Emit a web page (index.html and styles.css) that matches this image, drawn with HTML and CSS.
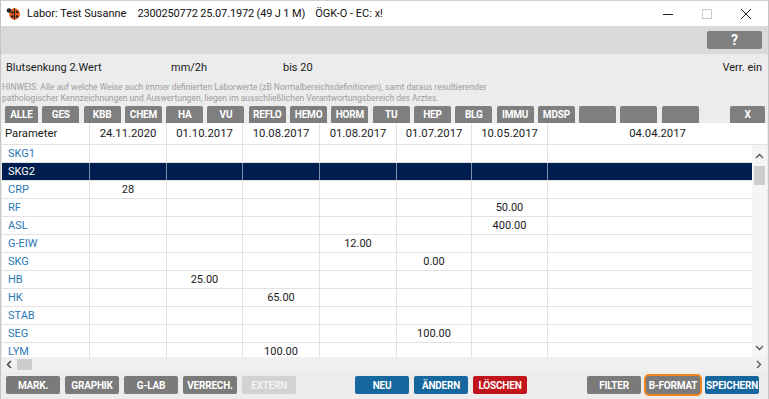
FILE: index.html
```html
<!DOCTYPE html>
<html lang="de">
<head>
<meta charset="utf-8">
<title>Labor</title>
<link rel="stylesheet" href="styles.css">
</head>
<body>
<div class="window">
  <header class="titlebar">
    <svg class="app-icon" width="15" height="15" viewBox="0 0 15 15">
      <ellipse cx="8.5" cy="8" rx="5.5" ry="5.8" fill="#e8601c"/>
      <path d="M8.5 2.2 L8.5 13.8" stroke="#222" stroke-width="1"/>
      <circle cx="3" cy="4.5" r="2.3" fill="#222"/>
      <circle cx="6.5" cy="6.5" r="1.3" fill="#222"/>
      <circle cx="11" cy="6" r="1.3" fill="#222"/>
      <circle cx="6.3" cy="10.5" r="1.3" fill="#222"/>
      <circle cx="11" cy="10.5" r="1.3" fill="#222"/>
    </svg>
    <span class="t-name">Labor: Test Susanne</span>
    <span class="t-id">2300250772 25.07.1972 (49 J 1 M)</span>
    <span class="t-ins">ÖGK-O - EC: x!</span>
    <div class="win-ctrls">
      <svg class="wc" width="12" height="12" viewBox="0 0 12 12"><path d="M1 6.5 H11" stroke="#222" stroke-width="1"/></svg>
      <svg class="wc" width="12" height="12" viewBox="0 0 12 12"><rect x="1.5" y="1.5" width="9" height="9" fill="none" stroke="#c8c8c8" stroke-width="1"/></svg>
      <svg class="wc" width="12" height="12" viewBox="0 0 12 12"><path d="M1 1 L11 11 M11 1 L1 11" stroke="#222" stroke-width="1"/></svg>
    </div>
  </header>

  <div class="toolbar">
    <button class="help">?</button>
  </div>

  <main class="content">
    <div class="info">
      <span class="i-name">Blutsenkung 2.Wert</span>
      <span class="i-unit">mm/2h</span>
      <span class="i-range">bis 20</span>
      <span class="i-verr">Verr. ein</span>
    </div>
    <p class="hint">HINWEIS: Alle auf welche Weise auch immer definierten Laborwerte (zB Normalbereichsdefinitionen), samt daraus resultierender<br>pathologischer Kennzeichnungen und Auswertungen, liegen im ausschließlichen Verantwortungsbereich des Arztes.</p>

    <nav class="tabs">
      <button class="tab first">ALLE</button>
      <button class="tab">GES</button>
      <button class="tab">KBB</button>
      <button class="tab">CHEM</button>
      <button class="tab">HA</button>
      <button class="tab">VU</button>
      <button class="tab">REFLO</button>
      <button class="tab">HEMO</button>
      <button class="tab">HORM</button>
      <button class="tab">TU</button>
      <button class="tab">HEP</button>
      <button class="tab">BLG</button>
      <button class="tab">IMMU</button>
      <button class="tab">MDSP</button>
      <button class="tab"></button>
      <button class="tab"></button>
      <button class="tab"></button>
      <button class="tab close">X</button>
    </nav>

    <section class="grid">
      <div class="row head">
        <div class="c p">Parameter</div>
        <div class="c">24.11.2020</div>
        <div class="c">01.10.2017</div>
        <div class="c">10.08.2017</div>
        <div class="c">01.08.2017</div>
        <div class="c">01.07.2017</div>
        <div class="c">10.05.2017</div>
        <div class="c last">04.04.2017</div>
      </div>
      <div class="body-wrap">
        <div class="body">
          <div class="row"><div class="c p">SKG1</div><div class="c"></div><div class="c"></div><div class="c"></div><div class="c"></div><div class="c"></div><div class="c"></div><div class="c last"></div></div>
          <div class="row sel"><div class="c p">SKG2</div><div class="c"></div><div class="c"></div><div class="c"></div><div class="c"></div><div class="c"></div><div class="c"></div><div class="c last"></div></div>
          <div class="row"><div class="c p">CRP</div><div class="c">28</div><div class="c"></div><div class="c"></div><div class="c"></div><div class="c"></div><div class="c"></div><div class="c last"></div></div>
          <div class="row"><div class="c p">RF</div><div class="c"></div><div class="c"></div><div class="c"></div><div class="c"></div><div class="c"></div><div class="c">50.00</div><div class="c last"></div></div>
          <div class="row"><div class="c p">ASL</div><div class="c"></div><div class="c"></div><div class="c"></div><div class="c"></div><div class="c"></div><div class="c">400.00</div><div class="c last"></div></div>
          <div class="row"><div class="c p">G-EIW</div><div class="c"></div><div class="c"></div><div class="c"></div><div class="c">12.00</div><div class="c"></div><div class="c"></div><div class="c last"></div></div>
          <div class="row"><div class="c p">SKG</div><div class="c"></div><div class="c"></div><div class="c"></div><div class="c"></div><div class="c">0.00</div><div class="c"></div><div class="c last"></div></div>
          <div class="row"><div class="c p">HB</div><div class="c"></div><div class="c">25.00</div><div class="c"></div><div class="c"></div><div class="c"></div><div class="c"></div><div class="c last"></div></div>
          <div class="row"><div class="c p">HK</div><div class="c"></div><div class="c"></div><div class="c">65.00</div><div class="c"></div><div class="c"></div><div class="c"></div><div class="c last"></div></div>
          <div class="row"><div class="c p">STAB</div><div class="c"></div><div class="c"></div><div class="c"></div><div class="c"></div><div class="c"></div><div class="c"></div><div class="c last"></div></div>
          <div class="row"><div class="c p">SEG</div><div class="c"></div><div class="c"></div><div class="c"></div><div class="c"></div><div class="c">100.00</div><div class="c"></div><div class="c last"></div></div>
          <div class="row"><div class="c p">LYM</div><div class="c"></div><div class="c"></div><div class="c">100.00</div><div class="c"></div><div class="c"></div><div class="c"></div><div class="c last"></div></div>
        </div>
        <div class="vscroll">
          <svg class="arrow" width="9" height="6" viewBox="0 0 9 6"><path d="M1 5 L4.5 1.5 L8 5" fill="none" stroke="#555" stroke-width="1.3"/></svg>
          <div class="vthumb"></div>
          <div class="spacer"></div>
          <svg class="arrow" width="9" height="6" viewBox="0 0 9 6"><path d="M1 1 L4.5 4.5 L8 1" fill="none" stroke="#555" stroke-width="1.3"/></svg>
        </div>
      </div>
      <div class="hscroll">
        <svg class="harrow" width="6" height="9" viewBox="0 0 6 9"><path d="M5 1 L1.5 4.5 L5 8" fill="none" stroke="#333" stroke-width="1.3"/></svg>
        <div class="hthumb"></div>
        <div class="spacer"></div>
        <svg class="harrow" width="6" height="9" viewBox="0 0 6 9"><path d="M1 1 L4.5 4.5 L1 8" fill="none" stroke="#555" stroke-width="1.3"/></svg>
      </div>
    </section>

    <footer class="actions">
      <button class="btn grey">MARK.</button>
      <button class="btn grey">GRAPHIK</button>
      <button class="btn grey">G-LAB</button>
      <button class="btn grey">VERRECH.</button>
      <button class="btn disabled">EXTERN</button>
      <button class="btn blue neu">NEU</button>
      <button class="btn blue">ÄNDERN</button>
      <button class="btn red">LÖSCHEN</button>
      <button class="btn grey filter">FILTER</button>
      <button class="btn grey focus">B-FORMAT</button>
      <button class="btn blue">SPEICHERN</button>
    </footer>
  </main>
</div>
</body>
</html>
```

FILE: styles.css
```css
* { box-sizing: border-box; }
html, body { margin: 0; padding: 0; }
body {
  width: 769px;
  height: 399px;
  overflow: hidden;
  background: #ececec;
  font-family: Roboto, "Liberation Sans", sans-serif;
  color: #1a1a1a;
}
button { font-family: inherit; border: none; padding: 0; cursor: default; }

.window {
  width: 769px;
  height: 399px;
  display: flex;
  flex-direction: column;
  border-left: 1px solid #c4c4c4;
  border-right: 1px solid #c4c4c4;
}

/* title bar */
.titlebar {
  height: 26px;
  background: #fff;
  display: flex;
  align-items: center;
  font-family: Roboto, "Liberation Sans", sans-serif;
  font-size: 11px;
  color: #111;
  border-top: 1px solid #d0d0d0;
  white-space: nowrap;
}
.app-icon { margin-left: 5px; margin-right: 6px; flex: none; }
.t-name { flex: none; margin-right: 11px; }
.t-id { flex: none; margin-right: 10px; letter-spacing: -0.15px; }
.t-ins { flex: none; }
.win-ctrls {
  margin-left: auto;
  display: flex;
  align-items: center;
  gap: 27px;
  margin-right: 16px;
}
.wc { display: block; }

/* toolbar */
.toolbar {
  height: 28px;
  background: #dadada;
  display: flex;
  justify-content: flex-end;
  align-items: flex-start;
  padding: 5px 6px 0 0;
}
.help {
  width: 55px;
  height: 18px;
  background: #808080;
  color: #fff;
  font-weight: 700;
  font-size: 14px;
  line-height: 18px;
  border-radius: 2px;
}

/* content */
.content {
  flex: 1;
  display: flex;
  flex-direction: column;
  background: #ececec;
}
.info {
  height: 26px;
  display: flex;
  align-items: center;
  padding: 1px 6px 0 5px;
  font-size: 11px;
  color: #1a1a1a;
  white-space: nowrap;
}
.i-name { width: 165px; flex: none; }
.i-unit { width: 112px; flex: none; }
.i-verr { margin-left: auto; }

.hint {
  margin: 0;
  padding: 2px 0 0 1px;
  height: 26px;
  font-size: 8.5px;
  line-height: 11px;
  color: #9c9c9c;
  white-space: nowrap;
}

/* tabs */
.tabs {
  height: 17px;
  display: flex;
  gap: 4.3px;
  padding: 0 3px 0 4px;
}
.tab {
  width: 37px;
  height: 17px;
  background: #7f7f7f;
  color: #fff;
  font-size: 10px;
  font-weight: 700;
  border-radius: 2px 2px 0 0;
  letter-spacing: -0.2px;
  flex: none;
}
.tab.first { width: 33px; }
.tab.close { margin-left: auto; width: 35px; }

/* grid */
.grid {
  margin-left: 1px;
  margin-right: 1px;
  display: flex;
  flex-direction: column;
}
.row {
  display: grid;
  grid-template-columns: 88px 77px 76px 77px 77px 75px 76px 1fr;
  height: 18px;
  border-bottom: 1px solid #e2e2e2;
  background: #fff;
  font-size: 11px;
}
.row .c {
  border-right: 1px solid #e2e2e2;
  text-align: center;
  line-height: 17px;
  white-space: nowrap;
  overflow: hidden;
}
.row .c.last { border-right: none; }
.row .c.p {
  text-align: left;
  padding-left: 6px;
  color: #2a78b6;
}
.row.head { height: 22px; font-size: 11.3px; }
.row.head .c { line-height: 21px; }
.row.head .c.p { color: #1a1a1a; padding-left: 3px; }
.row.sel { background: #001e50; color: #fff; }
.row.sel .c { border-right-color: #8090a8; }
.row.sel .c.p { color: #fff; }
.row.sel .c.last { border-right: none; }

.body-wrap {
  height: 212px;
  display: flex;
  overflow: hidden;
}
.body { flex: 1; overflow: hidden; }
.vscroll {
  width: 15px;
  flex: none;
  background: #f5f5f5;
  display: flex;
  flex-direction: column;
  align-items: center;
  padding: 8px 0 6px;
}
.vscroll .arrow { display: block; flex: none; }
.vthumb {
  width: 11px;
  height: 19px;
  background: #cdcdcd;
  margin-top: 7px;
}
.spacer { flex: 1; }

.hscroll {
  height: 15px;
  background: #f0f0f0;
  display: flex;
  align-items: center;
  padding: 0 5px 0 4px;
}
.harrow { display: block; flex: none; }
.hthumb {
  width: 15px;
  height: 11px;
  background: #cdcdcd;
  margin-left: 5px;
}

/* bottom actions */
.actions {
  display: flex;
  align-items: flex-start;
  gap: 5px;
  padding: 4px 6px 0 5px;
}
.btn {
  width: 54px;
  height: 18px;
  font-size: 10px;
  font-weight: 700;
  color: #fff;
  border-radius: 2px;
  letter-spacing: -0.2px;
  flex: none;
}
.btn.grey { background: #7a7a7a; }
.btn.disabled { background: #d2d2d2; color: #f2f2f2; }
.btn.blue { background: #16679d; }
.btn.red { background: #c2141b; }
.btn.neu { margin-left: 54px; }
.btn.filter { margin-left: 55px; }
.btn.focus {
  box-shadow: 0 0 0 2px #f0841e;
  border-radius: 3px;
}
```
